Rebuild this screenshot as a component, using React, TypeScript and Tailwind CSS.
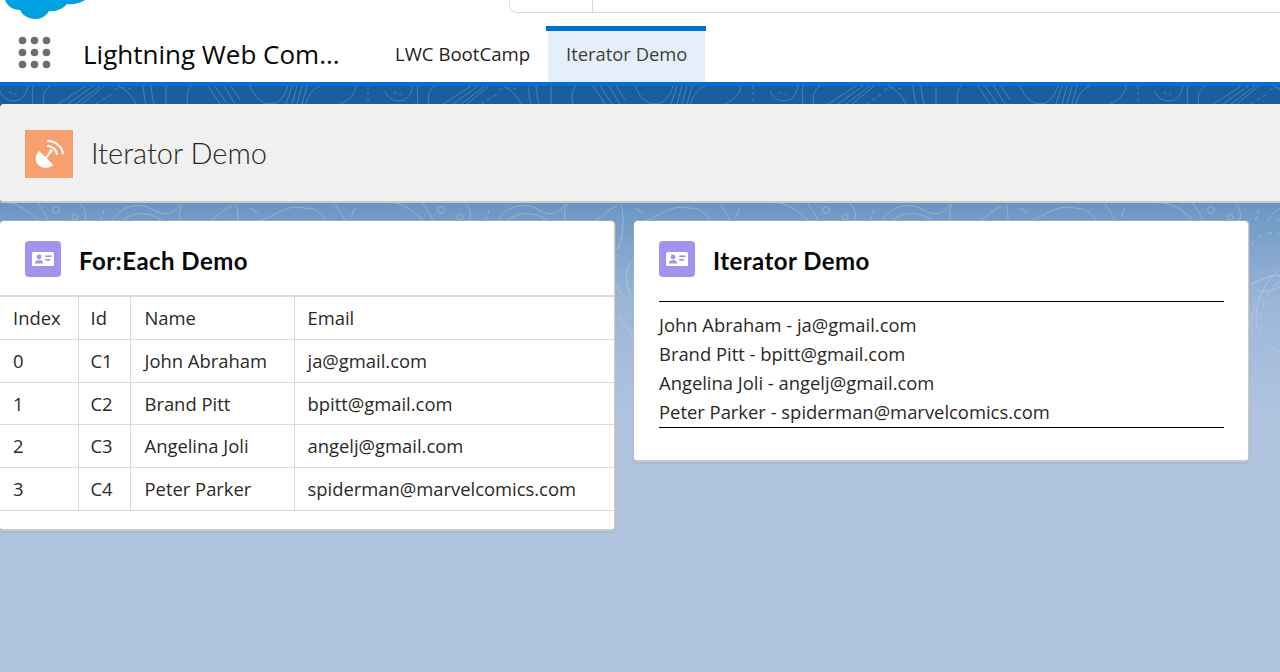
const people = [
	{ id: 'C1', name: 'John Abraham', email: 'ja@gmail.com' },
	{ id: 'C2', name: 'Brand Pitt', email: 'bpitt@gmail.com' },
	{ id: 'C3', name: 'Angelina Joli', email: 'angelj@gmail.com' },
	{ id: 'C4', name: 'Peter Parker', email: 'spiderman@marvelcomics.com' },
];

const rowHeights = ['h-[43px]', 'h-[42px]', 'h-[43px]', 'h-[43px]'];

const ContactIcon = () => (
	<div className="w-9 h-9 rounded bg-[#a094ed] shrink-0 flex items-center justify-center">
		<svg width="22" height="14" viewBox="0 0 22 14">
			<rect x="0" y="0" width="22" height="14" rx="1.5" fill="#fff" />
			<circle cx="7" cy="5" r="2.4" fill="#a094ed" />
			<path d="M2.800 11.600c0-2.200 1.600-3 2.800-3.300h2.800c1.200.3 2.800 1.100 2.800 3.300z" fill="#a094ed" />
			<rect x="13.200" y="3.400" width="6.400" height="1.700" fill="#a094ed" />
			<rect x="13.200" y="7" width="5" height="1.700" fill="#a094ed" />
		</svg>
	</div>
);

const Backdrop = () => (
	<svg className="absolute inset-0 w-full h-full" width="1280" height="586">
		<defs>
			<pattern id="contours" width="385" height="586" patternUnits="userSpaceOnUse">
				<g fill="none" stroke="#fff" strokeWidth="1">
					<path d="M-2 0c2 9 8 15 16 15s12-6 14-15" />
					<path d="M9 6l5 3 5-3" strokeDasharray="3 3" />
					<path d="M33 0c-1 6-1 12 0 18" />
					<path d="M50 0c-6 4-8 10-6 18" />
					<path d="M86 0L58 18M93 0L68 18M100 0L76 18M104 0L82 18" />
					<path d="M96 18l8-5 8-5M114 4c6-3 14-3 19 0" strokeDasharray="4 3" />
					<path d="M118 0c8 3 14 10 18 18" />
					<path d="M143 0c1 6 1 12 3 18M151 0c1 6 1 12 3 18M166 0v18" />
					<path d="M191 0c-4 4-5 11-3 18" />
					<path d="M208 0l12 18M215 0l12 18M224 0l11 18M231 0l9 14" />
					<path d="M250 0c4 10 11 18 20 18s15-8 18-18" />
					<path d="M292 0l-6 18M297 0l-5 18M302 0l-5 18M307 0l-5 18" />
					<path d="M320 0c-8 3-12 10-14 18" />
					<path d="M356 0c-1 8-7 14-16 18" />
					<path d="M368 0v18" strokeDasharray="3 3" />
					<path d="M-5 118c12-4 24 0 36 10s28 26 30 50" />
					<path d="M38 117c4 8 10 12 14 32s8 20 20 30" />
					<circle cx="56" cy="124" r="3.400" />
					<circle cx="75" cy="131" r="3" />
					<path d="M80 118c6 4 8 14 1 24" />
					<path d="M104 124l-4 12" strokeDasharray="4 3" />
					<path d="M112 136c6-13 24-22 40-13 8 5 20 9 28-5" />
					<path d="M122 135c10-9 24-10 38-2s26 16 38 36" />
					<path d="M182 118c-3 6-3 12-1 18" />
					<path d="M207 136c8-2 14-12 25-16M250 122l8 5" />
					<path d="M255 136c14-2 26-14 40-15l18 2c6 3 10 6 13 13" />
					<path d="M335 118c6 8 8 14 11 18M355 122l-4 9" />
					<path d="M130 150c16 14 16 36 -4 50c-18 10 -26 4 -30 -2" />
					<path d="M96 160c6-10 16-16 28-12" strokeDasharray="6 4" />
					<path d="M96 198c14-6 26-12 34-6M100 220c-4 10-6 20-2 30" />
					<path d="M124 184c-14 12-26 32-22 58 3 10 12 18 22 24" />
					<path d="M124 196c-14 10-20 30-18 48" strokeDasharray="7 5" />
					<path d="M232 168c-8 10 -4 28 4 40M246 176c-6 8 -6 22 0 32M232 230c6 8 14 12 16 24" />
					<path d="M236 118c4 14 2 36 -4 46" />
				</g>
			</pattern>
			<linearGradient id="fade" x1="0" y1="0" x2="0" y2="1">
				<stop offset="0" stopColor="#fff" stopOpacity="0.22" />
				<stop offset="0.33" stopColor="#fff" stopOpacity="0.28" />
				<stop offset="0.6" stopColor="#fff" stopOpacity="0" />
			</linearGradient>
			<mask id="fadeMask">
				<rect width="1280" height="586" fill="url(#fade)" />
			</mask>
		</defs>
		<rect width="1280" height="586" fill="url(#contours)" mask="url(#fadeMask)" />
	</svg>
);

const App = () => {
	return (
		<div className="w-[1280px] h-[672px] overflow-hidden bg-white font-['Open_Sans',sans-serif] text-[#2b2826]">
			<header className="h-[86px] bg-white border-b-4 border-[#0070d2]">
				<div className="h-[26px] flex items-start">
					<svg className="ml-[5px] shrink-0" width="80" height="20" viewBox="0 0 80 20">
						<path d="M0 0c2 6 8 10 15 10 3 6 9 9 16 9 6 0 11-4 13-8 6 1 14-2 18-7 4 1 12 0 18-4z" fill="#00a1e0" />
					</svg>
					<div className="ml-[424px] h-[13px] flex-1 border-l border-b border-[#dddbda] rounded-bl-lg flex">
						<div className="w-[83px] border-r border-[#dddbda]" />
					</div>
				</div>
				<div className="h-[56px] flex items-stretch">
					<svg className="ml-[18px] mt-[10px] shrink-0" width="34" height="34" viewBox="0 0 34 34">
						<g fill="#706e6b">
							{[4.5, 16.5, 28.5].map((cy) =>
								[4.5, 16.5, 28.5].map((cx) => <circle key={`${cx}-${cy}`} cx={cx} cy={cy} r="3.800" />)
							)}
						</g>
					</svg>
					<div className="ml-[31px] w-[262px] text-[26px] leading-[56px] text-[#080707] whitespace-nowrap">Lightning Web Com...</div>
					<div className="ml-[50px] w-[135px] text-[18.6px] leading-[56px] text-[#1f1d1c] whitespace-nowrap">LWC BootCamp</div>
					<div className="ml-[16px] w-[160px] pl-[2px] pr-[1px]">
						<div className="-ml-[2px] -mr-[1px] h-[5px] bg-[#0070d2]" />
						<div className="h-[51px] bg-[#e5eff9] pl-[18px] text-[18.4px] leading-[46px] text-[#3e3e3c] whitespace-nowrap">Iterator Demo</div>
					</div>
				</div>
			</header>

			<main className="relative h-[586px] bg-[linear-gradient(180deg,#195c9d_0px,#1c5f9f_20px,#6f99c5_125px,#9bb6d8_215px,#b0c4df_330px)]">
				<Backdrop />
				<div className="relative pt-[18px]">
					<section className="w-[1300px] h-[99px] bg-[#f0f0f0] rounded border-b-2 border-[#c9c9c9] flex items-center pl-[25px] pt-[3px]">
						<div className="w-12 h-12 bg-[#f89f70] flex items-center justify-center">
							<svg width="32" height="32" viewBox="0 0 32 32">
								<path d="M6.300 13C1.500 17.500 1.800 23.500 5.500 27C9.200 30.500 15.500 31 20.300 27Z" fill="#fff" />
								<path d="M13 20l5-7" stroke="#fff" strokeWidth="2" />
								<circle cx="18" cy="13" r="1.800" fill="#fff" />
								<g fill="none" stroke="#fff" strokeWidth="2" strokeLinecap="round">
									<path d="M15 8c4.500.3 8.500 3.500 9 8" />
									<path d="M15 3c7.500.3 14 5.500 15 12.500" />
								</g>
							</svg>
						</div>
						<h1 className="ml-[18px] mb-[2px] font-['Lato',sans-serif] font-light text-[29px] text-[#2b2826]">Iterator Demo</h1>
					</section>

					<div className="mt-[18px] flex items-start gap-[19px]">
						<section className="w-[615px] h-[310px] bg-white rounded border-b-2 border-r border-[#c9c9c9] ring-1 ring-[#c9c9c9]/40 shadow-sm">
							<div className="h-[74px] flex items-center pl-[25px] pt-[2px]">
								<ContactIcon />
								<h2 className="ml-[18px] mt-[3px] font-['Lato',sans-serif] font-bold text-[24px] tracking-[0.45px] text-[#080707]">For:Each Demo</h2>
							</div>
							<table className="w-full table-fixed border-collapse text-[18.4px]">
								<thead>
									<tr className="h-[43px] border-t-2 border-b border-[#dddbda]">
										<th className="w-[78px] pl-[13px] pt-[1px] text-left font-normal border-r border-[#dddbda]">Index</th>
										<th className="w-[52px] pl-[12px] pt-[1px] text-left font-normal border-r border-[#dddbda]">Id</th>
										<th className="w-[164px] pl-[14px] pt-[1px] text-left font-normal border-r border-[#dddbda]">Name</th>
										<th className="pl-[13px] pt-[1px] text-left font-normal">Email</th>
									</tr>
								</thead>
								<tbody>
									{people.map((person, i) => (
										<tr key={person.id} className={`${rowHeights[i]} border-b border-[#dddbda]`}>
											<td className="pl-[13px] pt-[1px] border-r border-[#dddbda]">{i}</td>
											<td className="pl-[12px] pt-[1px] border-r border-[#dddbda]">{person.id}</td>
											<td className="pl-[14px] pt-[1px] border-r border-[#dddbda]">{person.name}</td>
											<td className="pl-[13px] pt-[1px]">{person.email}</td>
										</tr>
									))}
								</tbody>
							</table>
						</section>

						<section className="w-[615px] h-[241px] bg-white rounded border-b-2 border-r border-[#c9c9c9] ring-1 ring-[#c9c9c9]/40 shadow-sm pl-[25px] pr-[24px]">
							<div className="h-[74px] flex items-center pt-[2px]">
								<ContactIcon />
								<h2 className="ml-[18px] mt-[3px] font-['Lato',sans-serif] font-bold text-[24px] tracking-[0.45px] text-[#080707]">Iterator Demo</h2>
							</div>
							<ul className="mt-[6px] border-y border-black pt-[8px] pb-[1px] text-[18.4px] leading-[29px]">
								{people.map((person) => (
									<li key={person.id}>{person.name} - {person.email}</li>
								))}
							</ul>
						</section>
					</div>
				</div>
			</main>
		</div>
	);
};

export default App;
